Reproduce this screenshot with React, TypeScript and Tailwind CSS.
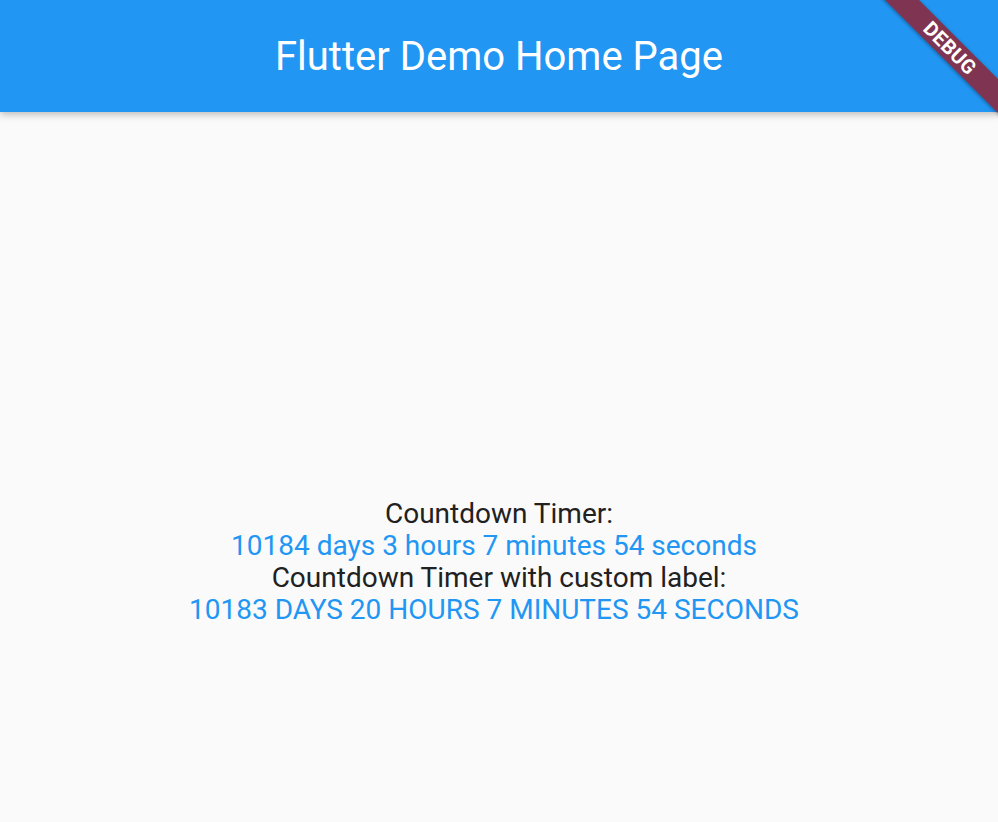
const font = { fontFamily: "Roboto, 'Noto Sans', sans-serif" };

function DebugBanner() {
  return (
    <div className="pointer-events-none absolute inset-0 z-20 overflow-hidden">
      <div className="absolute left-[849.75px] top-[36.25px] flex h-[24px] w-[200px] rotate-45 items-center justify-center bg-[#7f3552] shadow-[0_1px_4px_rgba(0,0,0,0.35)]">
        <span className="text-[20px] font-bold leading-none tracking-[0.3px] text-white">DEBUG</span>
      </div>
    </div>
  );
}

export default function App() {
  return (
    <div className="relative flex h-[822px] w-full flex-col overflow-hidden bg-[#fafafa]" style={font}>
      {/* app bar */}
      <header className="relative z-10 flex h-[112px] shrink-0 items-center justify-center bg-[#2196f3] shadow-[0_2px_8px_rgba(0,0,0,0.28)]">
        <h1 className="mt-[2px] text-[40px] font-normal text-white">Flutter Demo Home Page</h1>
      </header>

      {/* body */}
      <main className="flex flex-col items-center pt-[386px] text-[28px] leading-[32px]">
        <p className="text-[#212121]">Countdown Timer:</p>
        <p className="pr-[10px] text-[#2196f3]">10184 days 3 hours 7 minutes 54 seconds</p>
        <p className="text-[#212121]">Countdown Timer with custom label:</p>
        <p className="pr-[10px] text-[#2196f3]">10183 DAYS 20 HOURS 7 MINUTES 54 SECONDS</p>
      </main>

      <DebugBanner />
    </div>
  );
}
